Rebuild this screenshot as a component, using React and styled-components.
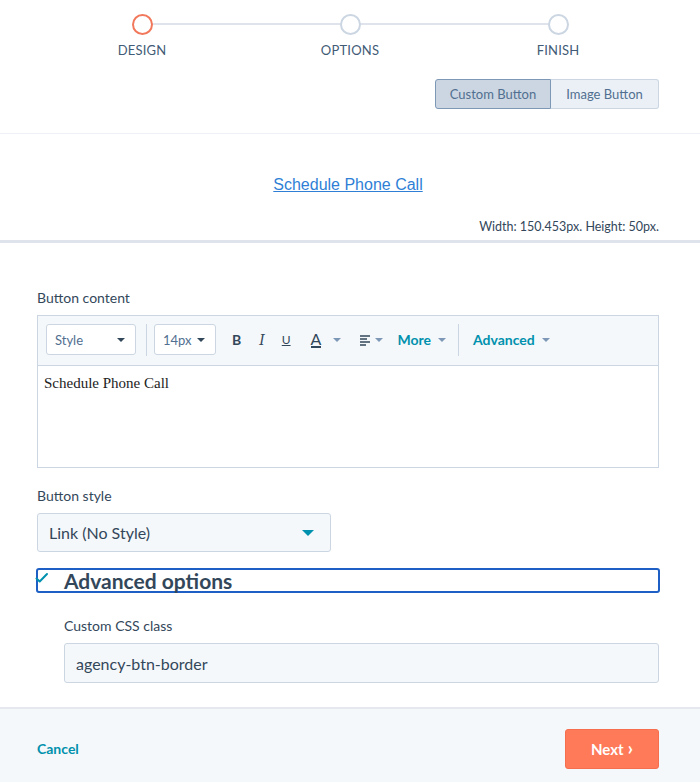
import React from "react";
import styled, { createGlobalStyle } from "styled-components";

const Global = createGlobalStyle`
  html, body { margin: 0; padding: 0; background: #fff; }
  body { font-family: Lato, "Open Sans", sans-serif; color: #33475b; }
  * { box-sizing: border-box; }
`;

const Page = styled.div`
  width: 700px;
  height: 782px;
  display: flex;
  flex-direction: column;
  overflow: hidden;
  background: #fff;
`;

const Header = styled.div`
  padding: 14px 41px 24px 38px;
  border-bottom: 1px solid #eef2f6;
  display: flex;
  flex-direction: column;
`;

const Stepper = styled.div`
  display: grid;
  grid-template-columns: repeat(3, 208px);
`;

const Step = styled.div`
  position: relative;
  display: flex;
  flex-direction: column;
  align-items: center;
  &::before, &::after {
    content: "";
    position: absolute;
    top: 9px;
    height: 2px;
    background: #dfe3eb;
    width: 50%;
  }
  &::before { left: 0; display: ${(p) => (p.first ? "none" : "block")}; }
  &::after { right: 0; display: ${(p) => (p.last ? "none" : "block")}; }
`;

const Dot = styled.div`
  position: relative;
  z-index: 1;
  width: 21px;
  height: 21px;
  border-radius: 50%;
  background: #fff;
  border: 2px solid ${(p) => (p.active ? "#f2785c" : "#cbd6e2")};
`;

const StepLabel = styled.div`
  margin-top: 7px;
  font-size: 13px;
  letter-spacing: 0.2px;
  color: #425b76;
  line-height: 16px;
`;

const ToggleRow = styled.div`
  display: flex;
  justify-content: flex-end;
  margin-top: 21px;
`;

const ToggleBtn = styled.div`
  height: 30px;
  width: ${(p) => p.w}px;
  display: flex;
  align-items: center;
  justify-content: center;
  font-size: 13px;
  color: #516f90;
  background: ${(p) => (p.active ? "#cbd6e2" : "#eaf0f6")};
  border: 1px solid ${(p) => (p.active ? "#7c98b6" : "#cbd6e2")};
  border-radius: ${(p) => (p.active ? "3px 0 0 3px" : "0 3px 3px 0")};
  ${(p) => (p.active ? "" : "border-left: none;")}
`;

const Preview = styled.div`
  height: 109px;
  border-bottom: 3px solid #dfe3eb;
  display: flex;
  flex-direction: column;
  align-items: center;
  padding: 41px 41px 0 37px;
`;

const PreviewLink = styled.a`
  font-family: "Liberation Sans", Arial, sans-serif;
  font-size: 16px;
  color: #2f7fd6;
  text-decoration: underline;
  line-height: 20px;
  cursor: pointer;
`;

const Dims = styled.div`
  align-self: flex-end;
  margin-top: 24px;
  font-size: 12.5px;
  color: #33475b;
`;

const Form = styled.div`
  flex: 1;
  padding: 46px 41px 0 37px;
  display: flex;
  flex-direction: column;
`;

const Label = styled.div`
  font-size: 14px;
  line-height: 18px;
  color: #33475b;
  margin-bottom: 8px;
`;

const Editor = styled.div`
  border: 1px solid #cbd6e2;
  height: 153px;
  display: flex;
  flex-direction: column;
  margin-bottom: 19px;
`;

const Toolbar = styled.div`
  height: 50px;
  background: #f5f8fa;
  border-bottom: 1px solid #cbd6e2;
  display: flex;
  align-items: center;
  padding: 0 8px 2px;
`;

const MiniSelect = styled.div`
  width: ${(p) => p.w}px;
  height: 31px;
  border: 1px solid #cbd6e2;
  border-radius: 3px;
  background: #fff;
  display: flex;
  align-items: center;
  justify-content: space-between;
  padding: 0 10px 0 8px;
  font-size: 13px;
  color: #516f90;
`;

const Caret = styled.span`
  width: 0;
  height: 0;
  border-left: ${(p) => p.s || 4}px solid transparent;
  border-right: ${(p) => p.s || 4}px solid transparent;
  border-top: ${(p) => p.s || 4}px solid ${(p) => p.color || "#33475b"};
  display: inline-block;
  margin-left: ${(p) => p.ml || 0}px;
`;

const Sep = styled.div`
  width: 1px;
  height: 32px;
  background: #cbd6e2;
  margin: 0 ${(p) => p.r || 7}px 0 ${(p) => p.l || 10}px;
`;

const ToolIcon = styled.span`
  display: inline-flex;
  align-items: center;
  margin-left: ${(p) => p.ml}px;
  font-size: 14px;
  font-weight: 700;
  color: #33475b;
`;

const Italic = styled.span`
  font-family: "DejaVu Serif", serif;
  font-style: italic;
  font-weight: 400;
  font-size: 14px;
`;

const Underlined = styled.span`
  font-size: 12px;
  font-weight: 400;
  text-decoration: underline;
`;

const ColorA = styled.span`
  font-size: 16px;
  font-weight: 400;
  border-bottom: 2px solid #33475b;
  line-height: 15px;
`;

const ToolLink = styled.span`
  display: inline-flex;
  align-items: center;
  margin-left: ${(p) => p.ml}px;
  font-size: 14px;
  font-weight: 700;
  color: #0091ae;
`;

const Content = styled.div`
  flex: 1;
  padding: 9px 6px;
  font-family: "Liberation Serif", "Times New Roman", serif;
  font-size: 15px;
  color: #222;
`;

const BigSelect = styled.div`
  width: 294px;
  height: 39px;
  background: #f5f8fa;
  border: 1px solid #cbd6e2;
  border-radius: 3px;
  display: flex;
  align-items: center;
  justify-content: space-between;
  padding: 0 16px 0 11px;
  font-size: 16px;
  color: #33475b;
  margin-bottom: 16px;
`;

const AdvBox = styled.div`
  position: relative;
  margin: 0 -1px;
  height: 25px;
  border: 2px solid #1d5fc4;
  border-radius: 3px;
  display: flex;
  align-items: center;
  padding-left: 26px;
  font-size: 21px;
  font-weight: 700;
  color: #33475b;
  margin-bottom: 24px;
`;

const Check = styled.svg`
  position: absolute;
  left: -3px;
  top: 2px;
`;

const Sub = styled.div`
  padding-left: 27px;
  display: flex;
  flex-direction: column;
`;

const Input = styled.div`
  height: 40px;
  background: #f5f8fa;
  border: 1px solid #cbd6e2;
  border-radius: 3px;
  display: flex;
  align-items: center;
  padding-left: 11px;
  font-size: 16px;
  color: #33475b;
`;

const Footer = styled.div`
  height: 75px;
  background: #f5f8fa;
  border-top: 2px solid #e5e9ef;
  display: flex;
  align-items: center;
  justify-content: space-between;
  padding: 6px 41px 0 37px;
`;

const Cancel = styled.span`
  font-size: 14px;
  font-weight: 700;
  color: #0091ae;
`;

const NextBtn = styled.div`
  width: 94px;
  height: 40px;
  background: #ff7a59;
  border: 1px solid #f56e4d;
  border-radius: 3px;
  color: #fff;
  font-size: 15px;
  font-weight: 700;
  display: flex;
  align-items: center;
  justify-content: center;
  gap: 4px;
`;

const Chevron = styled.span`
  font-size: 18px;
  line-height: 1;
  margin-top: -2px;
`;

const AlignIcon = () => (
  <svg width="12" height="12" viewBox="0 0 12 12">
    <path d="M1 2h10M1 5h7M1 8h10M1 11h6" stroke="#33475b" strokeWidth="1.4" />
  </svg>
);

export default function App() {
  return (
    <Page>
      <Global />
      <Header>
        <Stepper>
          <Step first>
            <Dot active />
            <StepLabel>DESIGN</StepLabel>
          </Step>
          <Step>
            <Dot />
            <StepLabel>OPTIONS</StepLabel>
          </Step>
          <Step last>
            <Dot />
            <StepLabel>FINISH</StepLabel>
          </Step>
        </Stepper>
        <ToggleRow>
          <ToggleBtn active w={116}>Custom Button</ToggleBtn>
          <ToggleBtn w={108}>Image Button</ToggleBtn>
        </ToggleRow>
      </Header>
      <Preview>
        <PreviewLink>Schedule Phone Call</PreviewLink>
        <Dims>Width: 150.453px. Height: 50px.</Dims>
      </Preview>
      <Form>
        <Label>Button content</Label>
        <Editor>
          <Toolbar>
            <MiniSelect w={90}>
              Style <Caret />
            </MiniSelect>
            <Sep />
            <MiniSelect w={62}>
              14px <Caret />
            </MiniSelect>
            <ToolIcon ml={16}>B</ToolIcon>
            <ToolIcon ml={18}><Italic>I</Italic></ToolIcon>
            <ToolIcon ml={17}><Underlined>U</Underlined></ToolIcon>
            <ToolIcon ml={20}><ColorA>A</ColorA><Caret color="#7c98b6" ml={12} /></ToolIcon>
            <ToolIcon ml={18}><AlignIcon /><Caret color="#7c98b6" ml={4} /></ToolIcon>
            <ToolLink ml={14}>More<Caret color="#7c98b6" ml={7} /></ToolLink>
            <Sep l={12} r={14} />
            <ToolLink ml={0}>Advanced<Caret color="#7c98b6" ml={7} /></ToolLink>
          </Toolbar>
          <Content>Schedule Phone Call</Content>
        </Editor>
        <Label>Button style</Label>
        <BigSelect>
          Link (No Style)
          <Caret color="#0091ae" s={6} />
        </BigSelect>
        <AdvBox>
          <Check width="14" height="12" viewBox="0 0 14 12">
            <path d="M1.5 6.5l3.2 3L12 2" fill="none" stroke="#0091ae" strokeWidth="2" strokeLinecap="round" strokeLinejoin="round" />
          </Check>
          Advanced options
        </AdvBox>
        <Sub>
          <Label>Custom CSS class</Label>
          <Input>agency-btn-border</Input>
        </Sub>
      </Form>
      <Footer>
        <Cancel>Cancel</Cancel>
        <NextBtn>Next <Chevron>›</Chevron></NextBtn>
      </Footer>
    </Page>
  );
}
